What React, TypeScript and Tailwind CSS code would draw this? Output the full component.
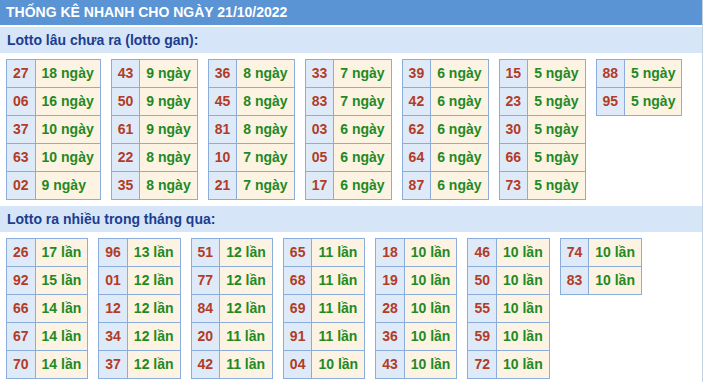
import React from 'react';

type Row = [string, string];

const gan: Row[][] = [
  [['27', '18'], ['06', '16'], ['37', '10'], ['63', '10'], ['02', '9']],
  [['43', '9'], ['50', '9'], ['61', '9'], ['22', '8'], ['35', '8']],
  [['36', '8'], ['45', '8'], ['81', '8'], ['10', '7'], ['21', '7']],
  [['33', '7'], ['83', '7'], ['03', '6'], ['05', '6'], ['17', '6']],
  [['39', '6'], ['42', '6'], ['62', '6'], ['64', '6'], ['87', '6']],
  [['15', '5'], ['23', '5'], ['30', '5'], ['66', '5'], ['73', '5']],
  [['88', '5'], ['95', '5']],
];

const nhieu: Row[][] = [
  [['26', '17'], ['92', '15'], ['66', '14'], ['67', '14'], ['70', '14']],
  [['96', '13'], ['01', '12'], ['12', '12'], ['34', '12'], ['37', '12']],
  [['51', '12'], ['77', '12'], ['84', '12'], ['20', '11'], ['42', '11']],
  [['65', '11'], ['68', '11'], ['69', '11'], ['91', '11'], ['04', '10']],
  [['18', '10'], ['19', '10'], ['28', '10'], ['36', '10'], ['43', '10']],
  [['46', '10'], ['50', '10'], ['55', '10'], ['59', '10'], ['72', '10']],
  [['74', '10'], ['83', '10']],
];

function LottoTable({ rows, unit }: { rows: Row[]; unit: string }) {
  return (
    <table className="border-collapse border border-[#8aaddb]">
      <tbody>
        {rows.map(([num, count]) => (
          <tr key={num} className="h-[28px]">
            <td className="border border-[#8aaddb] bg-[#dfeaf9] px-[6px] py-0 leading-[15px] text-[#b23c26]">
              {num}
            </td>
            <td className="border border-[#8aaddb] bg-[#fdf3e2] px-[6px] py-0 leading-[15px] text-[#1f8a25]">
              {count} {unit}
            </td>
          </tr>
        ))}
      </tbody>
    </table>
  );
}

function Section({ title, tables, unit }: { title: string; tables: Row[][]; unit: string }) {
  return (
    <div>
      <div className="flex h-[26px] items-center bg-[#d6e6f8] px-[7px] text-[14px] font-bold text-[#1d3d8f]">
        {title}
      </div>
      <div className="flex items-start gap-[10px] px-[6px] pb-[6px] pt-[6px] text-[14px] font-bold">
        {tables.map((rows, i) => (
          <LottoTable key={i} rows={rows} unit={unit} />
        ))}
      </div>
    </div>
  );
}

export default function App() {
  return (
    <div
      className="h-[382px] w-[703px] border-r border-[#c5d2e2] bg-white"
      style={{ fontFamily: '"Liberation Sans", Arial, sans-serif' }}
    >
      <div className="flex h-[25px] items-center bg-[#5a94d5] px-[6px] text-[14px] font-bold text-white">
        THỐNG KÊ NHANH CHO NGÀY 21/10/2022
      </div>
      <div className="h-[2px]" />
      <Section title="Lotto lâu chưa ra (lotto gan):" tables={gan} unit="ngày" />
      <Section title="Lotto ra nhiều trong tháng qua:" tables={nhieu} unit="lần" />
    </div>
  );
}
